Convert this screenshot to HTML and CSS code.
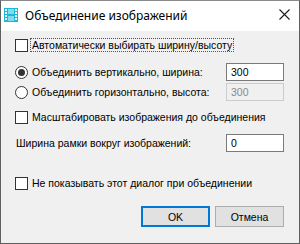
FILE: index.html
```html
<!DOCTYPE html>
<html>
<head>
<meta charset="utf-8">
<link rel="stylesheet" href="styles.css">
</head>
<body>
<div class="window">
  <div class="titlebar">
    <svg class="appicon" width="14" height="14" viewBox="0 0 14 14">
      <rect x="0" y="0" width="14" height="14" fill="#1cb8d8"/>
      <rect x="1" y="1" width="2" height="2" fill="#e8fbff"/>
      <rect x="1" y="4" width="2" height="2" fill="#e8fbff"/>
      <rect x="1" y="7" width="2" height="2" fill="#e8fbff"/>
      <rect x="1" y="10" width="2" height="2" fill="#e8fbff"/>
      <rect x="11" y="1" width="2" height="2" fill="#e8fbff"/>
      <rect x="11" y="4" width="2" height="2" fill="#e8fbff"/>
      <rect x="11" y="7" width="2" height="2" fill="#e8fbff"/>
      <rect x="11" y="10" width="2" height="2" fill="#e8fbff"/>
      <rect x="4" y="1" width="6" height="5" fill="#7fdcef"/>
      <rect x="4" y="8" width="6" height="5" fill="#7fdcef"/>
    </svg>
    <span class="title">Объединение изображений</span>
    <svg class="close" width="11" height="11" viewBox="0 0 11 11">
      <path d="M0.5 0.5 L10.5 10.5 M10.5 0.5 L0.5 10.5" stroke="#1a1a1a" stroke-width="1.1" fill="none"/>
    </svg>
  </div>
  <div class="content">
    <div class="row r1">
      <span class="check"></span>
      <span class="label focus">Автоматически выбирать ширину/высоту</span>
    </div>
    <div class="row r2">
      <span class="radio on"></span>
      <span class="label grow">Объединить вертикально, ширина:</span>
      <span class="input">300</span>
    </div>
    <div class="row r3">
      <span class="radio"></span>
      <span class="label grow">Объединить горизонтально, высота:</span>
      <span class="input disabled">300</span>
    </div>
    <div class="row r4">
      <span class="check"></span>
      <span class="label">Масштабировать изображения до объединения</span>
    </div>
    <div class="row r5">
      <span class="label grow plain">Ширина рамки вокруг изображений:</span>
      <span class="input">0</span>
    </div>
    <div class="row r6">
      <span class="check"></span>
      <span class="label">Не показывать этот диалог при объединении</span>
    </div>
    <div class="buttons">
      <span class="btn default">OK</span>
      <span class="btn">Отмена</span>
    </div>
  </div>
</div>
</body>
</html>
```
FILE: styles.css
```css
html, body {
  margin: 0;
  padding: 0;
  background: #f0f0f0;
}
.window {
  width: 300px;
  height: 244px;
  box-sizing: border-box;
  border: 1px solid #5f5f5f;
  border-top-color: #8a8a8a;
  background: #f0f0f0;
  display: flex;
  flex-direction: column;
  font-family: "Liberation Sans", Arial, sans-serif;
  font-size: 10.5px;
  color: #000;
}
.titlebar {
  height: 30px;
  background: #fff;
  display: flex;
  align-items: center;
  padding-left: 3px;
  padding-right: 9px;
  flex-shrink: 0;
}
.appicon {
  margin-right: 7px;
  margin-top: -3px;
}
.title {
  font-family: "Noto Sans", "Segoe UI", sans-serif;
  font-size: 12px;
  flex: 1;
  margin-top: -2px;
}
.close {
  margin-top: -3px;
}
.content {
  padding: 7px 15px 0 14px;
  display: flex;
  flex-direction: column;
}
.row {
  display: flex;
  align-items: center;
}
.r1 { height: 14px; }
.r2 { height: 18px; margin-top: 11px; }
.r3 { height: 18px; margin-top: 2px; }
.r4 { height: 14px; margin-top: 9px; }
.r5 { height: 18px; margin-top: 10px; }
.r6 { height: 14px; margin-top: 24px; }
.check {
  width: 11px;
  height: 11px;
  border: 1px solid #333;
  background: #fff;
  flex-shrink: 0;
}
.radio {
  width: 11px;
  height: 11px;
  border: 1px solid #333;
  border-radius: 50%;
  background: #fff;
  flex-shrink: 0;
  display: flex;
  align-items: center;
  justify-content: center;
}
.radio.on::after {
  content: "";
  width: 7px;
  height: 7px;
  border-radius: 50%;
  background: #333;
}
.label {
  margin-left: 2px;
  white-space: nowrap;
  line-height: 12px;
  padding: 0 1px;
  border: 1px dotted transparent;
}
.label.focus {
  border-color: #555;
}
.label.plain {
  margin-left: 0;
  padding-left: 0;
}
.grow {
  flex: 1;
}
.input {
  width: 52px;
  height: 16px;
  border: 1px solid #7a7a7a;
  background: #fff;
  box-sizing: content-box;
  line-height: 16px;
  padding-left: 4px;
  flex-shrink: 0;
}
.input.disabled {
  border-color: #cccccc;
  background: #f0f0f0;
  color: #8a8a8a;
}
.buttons {
  display: flex;
  justify-content: flex-end;
  gap: 5px;
  margin-top: 16px;
}
.btn {
  width: 67px;
  height: 19px;
  border: 1px solid #adadad;
  background: #e1e1e1;
  display: flex;
  align-items: center;
  justify-content: center;
}
.btn.default {
  border: 1px solid #0078d7;
  box-shadow: inset 0 0 0 1px #0078d7;
}
```
